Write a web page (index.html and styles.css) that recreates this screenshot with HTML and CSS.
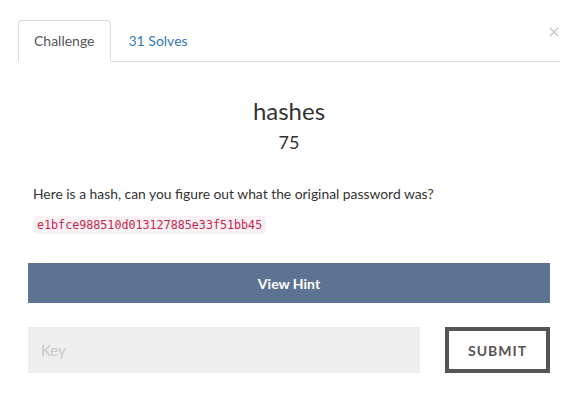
FILE: index.html
```html
<!DOCTYPE html>
<html>
<head>
<meta charset="utf-8">
<link rel="stylesheet" href="styles.css">
</head>
<body>
<div class="modal">
  <button class="close" aria-label="Close">
    <svg width="10" height="10" viewBox="0 0 10 10"><path d="M1 1L9 9M9 1L1 9" stroke="#c9c9c9" stroke-width="1.6" fill="none"/></svg>
  </button>
  <ul class="tabs">
    <li class="tab active"><a>Challenge</a></li>
    <li class="tab"><a class="link">31 Solves</a></li>
  </ul>
  <div class="body">
    <h3 class="title">hashes</h3>
    <h4 class="value">75</h4>
    <div class="description">
      <p class="desc">Here is a hash, can you figure out what the original password was?</p>
      <p class="codeline"><code>e1bfce988510d013127885e33f51bb45</code></p>
    </div>
    <button class="hint">View Hint</button>
    <div class="submit-row">
      <input class="key" type="text" placeholder="Key">
      <button class="submit">Submit</button>
    </div>
  </div>
</div>
</body>
</html>
```
FILE: styles.css
```css
* { box-sizing: border-box; }
html, body { margin: 0; padding: 0; background: #fff; }
body {
  font-family: Lato, "Open Sans", sans-serif;
  font-size: 14px;
  line-height: 20px;
  color: #333;
}
.modal {
  position: relative;
  padding: 20px 23px 0 18px;
}
.close {
  position: absolute;
  top: 27px;
  right: 24px;
  padding: 0;
  margin: 0;
  border: 0;
  background: none;
  width: 10px;
  height: 10px;
  line-height: 0;
}
.tabs {
  list-style: none;
  margin: 0;
  padding: 0;
  display: flex;
  border-bottom: 1px solid #ddd;
}
.tab {
  margin-bottom: -1px;
}
.tab a {
  display: block;
  padding: 10px 15px;
  margin-right: 2px;
  line-height: 20px;
  border: 1px solid transparent;
  border-radius: 4px 4px 0 0;
}
.tab.active a {
  color: #555;
  background: #fff;
  border-color: #ddd #ddd transparent;
}
.tab a.link {
  color: #337ab7;
}
.body {
  padding: 0 10px;
}
.title {
  margin: 36px 0 0;
  font-size: 24px;
  line-height: 26.4px;
  font-weight: 400;
  text-align: center;
  color: #333;
}
.value {
  margin: 9px 0 0;
  font-size: 18px;
  line-height: 19.8px;
  font-weight: 400;
  text-align: center;
  color: #333;
}
.description {
  padding-left: 5px;
}
.desc {
  margin: 31px 0 10px 0;
  font-size: 13.85px;
}
.codeline {
  margin: 0;
}
code {
  font-family: "DejaVu Sans Mono", "Liberation Mono", monospace;
  font-size: 11.7px;
  padding: 2px 4px;
  color: #c7254e;
  background: #f9f2f4;
  border-radius: 4px;
}
.hint {
  display: block;
  width: 100%;
  margin-top: 28px;
  height: 40px;
  padding: 0;
  border: 0;
  background: #5c7391;
  color: #fff;
  font-family: Lato, sans-serif;
  font-weight: 700;
  font-size: 14px;
}
.submit-row {
  display: flex;
  gap: 25px;
  margin-top: 24px;
}
.key {
  flex: 1;
  height: 46px;
  border: 0;
  background: #eee;
  padding: 0 13px;
  font-family: Lato, sans-serif;
  font-size: 15px;
  color: #555;
  outline: none;
}
.key::placeholder { color: #c9c9c9; }
.submit {
  width: 105px;
  height: 46px;
  border: 4px solid #555;
  background: #fff;
  color: #555;
  font-family: Lato, sans-serif;
  font-weight: 700;
  font-size: 14px;
  letter-spacing: 1px;
  text-transform: uppercase;
  padding: 0;
}
```
